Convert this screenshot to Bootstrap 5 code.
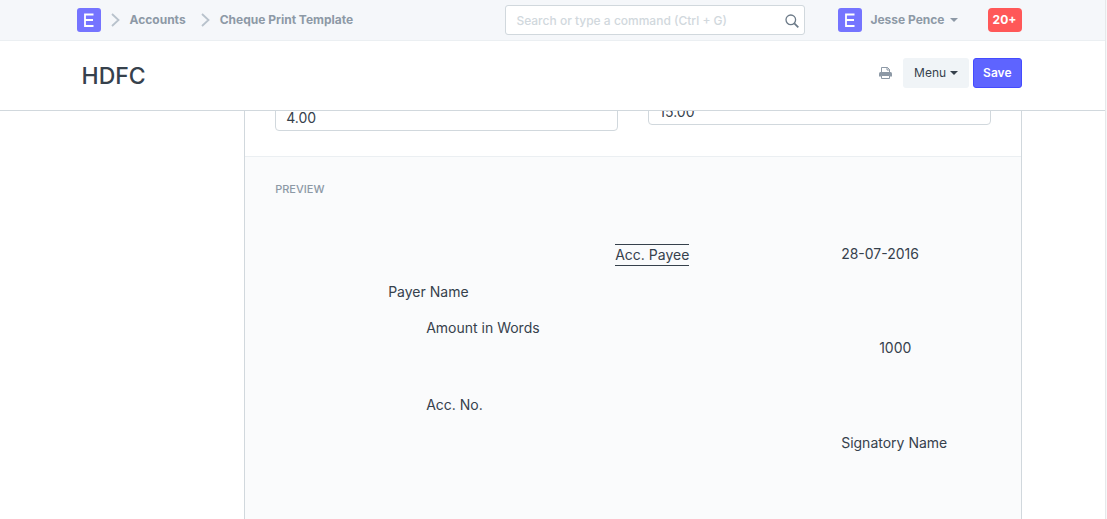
<!DOCTYPE html>
<html lang="en">
<head>
<meta charset="utf-8">
<meta name="viewport" content="width=device-width, initial-scale=1">
<title>HDFC - Cheque Print Template</title>
<link href="https://cdn.jsdelivr.net/npm/bootstrap@5.3.0/dist/css/bootstrap.min.css" rel="stylesheet">
<style>
  body { font-family: Inter, "Liberation Sans", sans-serif; font-size: 14px; line-height: 20px; color: #36414c; background: #f7f7f8; }
  .desk { border-right: 1px solid #e6e8ea; margin-right: 1px; background: #fff; }
  .desk-container { max-width: 970px; padding: 0 15px; }
  .topbar { background: #f5f7fa; border-bottom: 1px solid #ebeff2; height: 41px; font-size: 12px; font-weight: 700; }
  .topbar .desk-container { padding: 0 16px 0 9px; }
  .topbar a, .user-menu { color: #8d99a6; font-size: 12px; font-weight: 700; text-decoration: none; }
  .logo { width: 24px; height: 24px; display: block; }
  .crumb-arrow { width: 9px; height: 14px; margin: 0 10px; }
  .crumb-gap { margin-left: 15px; }
  .search-box { width: 300px; margin-right: 33px; }
  .search-box input { height: 30px; font-size: 12px; padding: 0 30px 0 10px; border: 1px solid #d1d8dd; border-radius: 3px; }
  .search-box input::placeholder { color: #d1d8dd; opacity: 1; font-weight: 500; }
  .search-box svg { right: 6px; top: 9px; width: 14px; height: 14px; }
  .caret { width: 8px; height: 4px; }
  .user-menu { margin-right: 30px; }
  .user-menu .caret { margin-left: 5px; }
  .user-menu, .topbar .count { line-height: 20px; }
  .count { background: #ff5858; color: #fff; font-size: 12px; font-weight: 700; width: 34px; height: 24px; border-radius: 4px; }
  .page-head { height: 70px; border-bottom: 1px solid #d1d8dd; background: #fff; }
  .page-head .desk-container { padding: 0 16px 6px 14px; }
  .page-head h1 { font-size: 23px; line-height: 30px; font-weight: 500; padding-top: 6px; }
  .head-btn { height: 30px; font-size: 12px; line-height: 18px; border-radius: 3px; padding: 5px 9px; font-weight: 400; }
  .print-btn { margin-right: 11px; }
  .menu-btn, .menu-btn:hover { background: #f0f4f7; color: #36414c; padding: 5px 11px; }
  .save-btn, .save-btn:hover { background: #5e64ff; border: 1px solid #444bff; color: #fff; font-weight: 600; }
  .desk-row { --bs-gutter-x: 30px; }
  .form-main { overflow: hidden; }
  .layout-main { border: solid #d1d8dd; border-width: 0 1px; }
  .fields { margin-top: -14px; padding: 0 15px 25px; }
  .fields input { height: 28px; font-size: 14px; padding: 0 10px; border: 1px solid #d1d8dd; border-radius: 4px; color: #36414c; }
  .label-gap { padding-top: 6px; }
  .preview { background: #fafbfc; border-top: 1px solid #ebeff2; padding: 22px 30px; }
  .preview h2 { font-size: 11px; line-height: 20px; font-weight: 500; color: #8d99a6; }
  .cheque span { position: absolute; white-space: nowrap; }
  .crossing { border: solid #36414c; border-width: 1px 0; }
</style>
</head>
<body>
<div class="desk d-flex flex-column vh-100 overflow-hidden">
  <header class="topbar flex-shrink-0">
    <div class="desk-container mx-auto h-100 d-flex align-items-center">
      <nav class="d-flex align-items-center me-auto" aria-label="Breadcrumb">
        <a href="#" aria-label="Home"><svg class="logo" viewBox="0 0 24 24"><rect width="24" height="24" rx="3" fill="#7574ff"/><path d="M16.500 6.500H8v11.500h8.500M8 12h8" fill="none" stroke="#fff" stroke-width="1.800"/></svg></a>
        <svg class="crumb-arrow" viewBox="0 0 9 14"><path d="M1 1l6.500 6-6.500 6" fill="none" stroke="#b8c2cc" stroke-width="1.800"/></svg>
        <a href="#">Accounts</a>
        <svg class="crumb-arrow crumb-gap" viewBox="0 0 9 14"><path d="M1 1l6.500 6-6.500 6" fill="none" stroke="#b8c2cc" stroke-width="1.800"/></svg>
        <a href="#">Cheque Print Template</a>
      </nav>
      <div class="search-box position-relative">
        <input type="text" class="form-control" placeholder="Search or type a command (Ctrl + G)" aria-label="Search">
        <svg class="position-absolute" viewBox="0 0 14 14" fill="none" stroke="#6c7a88"><circle cx="5.800" cy="5.800" r="4.800" stroke-width="1.300"/><path d="M9.300 9.300l4 4" stroke-width="1.800"/></svg>
      </div>
      <button class="user-menu btn border-0 p-0 d-flex align-items-center" type="button">
        <svg class="logo me-2" viewBox="0 0 24 24"><rect width="24" height="24" rx="3" fill="#7574ff"/><path d="M16.500 6.500H8v11.500h8.500M8 12h8" fill="none" stroke="#fff" stroke-width="1.800"/></svg>
        Jesse Pence
        <svg class="caret" viewBox="0 0 8 4"><path d="M0 0h8L4 4z" fill="#8d99a6"/></svg>
      </button>
      <button class="count btn border-0 p-0" type="button">20+</button>
    </div>
  </header>

  <section class="page-head flex-shrink-0">
    <div class="desk-container mx-auto h-100 d-flex align-items-center">
      <h1 class="m-0 me-auto">HDFC</h1>
      <button class="print-btn btn border-0 p-0 d-flex" type="button" aria-label="Print"><svg width="13" height="12" viewBox="0 0 13 12"><path d="M2.500 5.500V.500h6L10.500 2.500v3" fill="#fff" stroke="#8d99a6"/><path d="M8 0v3h3" fill="none" stroke="#8d99a6"/><path d="M0 9.500V6.500Q0 5 1.500 5h10Q13 5 13 6.500v3z" fill="#8d99a6"/><path d="M2.500 8.500v3h8v-3z" fill="#fff" stroke="#8d99a6"/></svg></button>
      <button class="head-btn menu-btn btn border-0 d-flex align-items-center" type="button">Menu <svg class="caret ms-1" viewBox="0 0 8 4"><path d="M0 0h8L4 4z" fill="#36414c"/></svg></button>
      <button class="head-btn save-btn btn ms-1" type="button">Save</button>
    </div>
  </section>

  <main class="form-main flex-fill d-flex flex-column">
    <div class="desk-container mx-auto w-100 flex-fill d-flex flex-column">
      <div class="row desk-row flex-fill">
        <div class="col-2"></div>
        <div class="col-10 d-flex">
          <div class="layout-main flex-fill d-flex flex-column">
            <div class="fields">
              <div class="row desk-row m-0">
                <div class="col-6 label-gap"><input class="form-control" type="text" value="4.00" aria-label="Distance from left edge"></div>
                <div class="col-6"><input class="form-control" type="text" value="15.00" aria-label="Distance from top edge"></div>
              </div>
            </div>
            <div class="preview flex-fill">
              <h2 class="m-0 text-uppercase">Preview</h2>
              <div class="cheque position-relative">
                <span class="crossing" style="left:340px;top:45px">Acc. Payee</span>
                <span style="left:566px;top:45px">28-07-2016</span>
                <span style="left:113px;top:83px">Payer Name</span>
                <span style="left:151px;top:119px">Amount in Words</span>
                <span style="left:604px;top:139px">1000</span>
                <span style="left:151px;top:196px">Acc. No.</span>
                <span style="left:566px;top:234px">Signatory Name</span>
              </div>
            </div>
          </div>
        </div>
      </div>
    </div>
  </main>
</div>
<script src="https://cdn.jsdelivr.net/npm/bootstrap@5.3.0/dist/js/bootstrap.bundle.min.js"></script>
</body>
</html>
